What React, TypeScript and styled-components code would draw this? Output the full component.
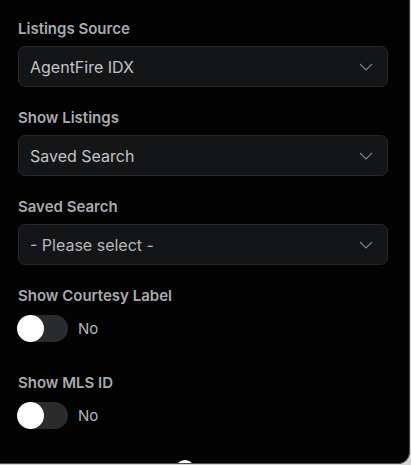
import React from "react";
import styled, { createGlobalStyle } from "styled-components";

const Global = createGlobalStyle`
  html, body { margin: 0; padding: 0; background: #d4d4d4; }
  body { font-family: Inter, "Noto Sans", sans-serif; }
`;

const Panel = styled.div`
  box-sizing: border-box;
  width: 410px;
  height: 464px;
  background: #030303;
  border-right: 1px solid #4a4a4a;
  border-bottom: 1px solid #4a4a4a;
  border-bottom-right-radius: 12px;
  overflow: hidden;
  padding: 19px 21px 0 18px;
  display: flex;
  flex-direction: column;
`;

const Field = styled.div<{ $toggle?: boolean }>`
  display: flex;
  flex-direction: column;
  gap: ${(p) => (p.$toggle ? "9px" : "7px")};
  margin-bottom: ${(p) => (p.$toggle ? "31px" : "21px")};
`;

const Label = styled.div`
  font-size: 15px;
  line-height: 20px;
  font-weight: 600;
  color: #a8aab0;
  display: flex;
  align-items: center;
  gap: 8px;
`;

const Select = styled.div<{ $placeholder?: boolean }>`
  box-sizing: border-box;
  height: 41px;
  background: #141517;
  border: 1px solid #25272a;
  border-radius: 7px;
  padding: 0 14px 0 11px;
  display: flex;
  align-items: center;
  justify-content: space-between;
  font-size: 16px;
  color: ${(p) => (p.$placeholder ? "#b6b8bc" : "#c2c4c8")};
`;

const ToggleRow = styled.div`
  display: flex;
  align-items: center;
  gap: 10px;
  font-size: 15px;
  color: #b3b5b9;
`;

const Track = styled.div`
  position: relative;
  width: 50px;
  height: 27px;
  border-radius: 14px;
  background: #2a2b2d;
`;

const Knob = styled.div`
  position: absolute;
  left: -1px;
  top: 0;
  width: 27px;
  height: 27px;
  border-radius: 50%;
  background: #ffffff;
`;

const InfoDot = styled.span`
  display: inline-block;
  width: 20px;
  height: 20px;
  border-radius: 50%;
  background: #ffffff;
`;

const Chevron = () => (
  <svg width="14" height="8" viewBox="0 0 14 8" fill="none">
    <path d="M1 1l6 6 6-6" stroke="#808286" strokeWidth="1.1" />
  </svg>
);

const SelectField = ({ label, value, placeholder }: { label: string; value: string; placeholder?: boolean }) => (
  <Field>
    <Label>{label}</Label>
    <Select $placeholder={placeholder}>
      <span>{value}</span>
      <Chevron />
    </Select>
  </Field>
);

const ToggleField = ({ label }: { label: string }) => (
  <Field $toggle>
    <Label>{label}</Label>
    <ToggleRow>
      <Track>
        <Knob />
      </Track>
      <span>No</span>
    </ToggleRow>
  </Field>
);

export default function App() {
  return (
    <>
      <Global />
      <Panel>
        <SelectField label="Listings Source" value="AgentFire IDX" />
        <SelectField label="Show Listings" value="Saved Search" />
        <SelectField label="Saved Search" value="- Please select -" placeholder />
        <ToggleField label="Show Courtesy Label" />
        <ToggleField label="Show MLS ID" />
        <Field>
          <Label>
            Use full display label
            <InfoDot />
          </Label>
        </Field>
      </Panel>
    </>
  );
}
